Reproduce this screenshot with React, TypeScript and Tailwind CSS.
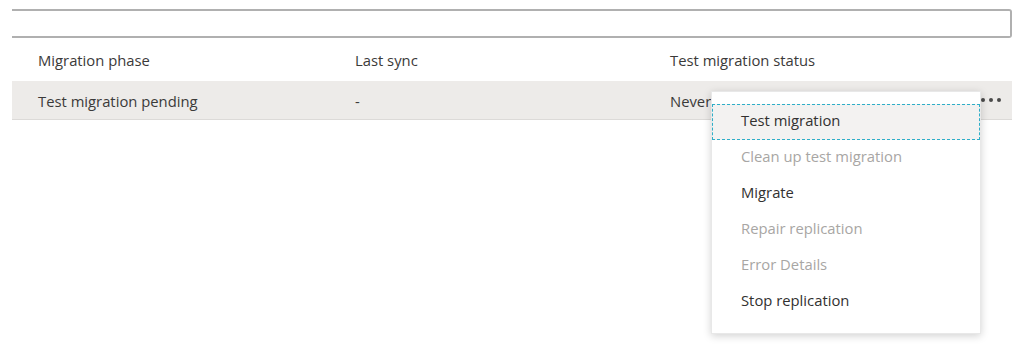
import React from 'react'

const font = { fontFamily: '"Open Sans", "Noto Sans", sans-serif' }

interface MenuItem {
  label: string
  disabled?: boolean
  focused?: boolean
}

const items: MenuItem[] = [
  { label: 'Test migration', focused: true },
  { label: 'Clean up test migration', disabled: true },
  { label: 'Migrate' },
  { label: 'Repair replication', disabled: true },
  { label: 'Error Details', disabled: true },
  { label: 'Stop replication' },
]

const ContextMenu: React.FC = () => (
  <div className="absolute left-[699px] top-[53px] w-[270px] bg-white pt-3 pb-[13px] shadow-[0_2px_8px_rgba(0,0,0,0.18)] border border-[#e8e8e8]">
    {items.map((item) => (
      <div
        key={item.label}
        className={`flex h-9 items-center pl-[29px] pb-[3px] text-[14.8px] ${
          item.focused
            ? 'bg-[#f3f2f1] outline outline-1 outline-dashed outline-[#2eaec8] -outline-offset-1'
            : ''
        } ${item.disabled ? 'text-[#a8a6a4]' : 'text-[#323130]'}`}
      >
        {item.label}
      </div>
    ))}
  </div>
)

export default function App() {
  return (
    <div className="h-[345px] w-[1024px] bg-white pt-[9px] pl-3" style={font}>
      {/* Search box, cropped on the left */}
      <div className="h-[29px] w-[1000px] rounded-r-[3px] border-y-2 border-r-2 border-[#b0b0b0]" />

      <div className="relative w-[1000px]">
        {/* Header */}
        <div className="grid h-[43px] grid-cols-[317px_315px_1fr] items-center text-[14.8px] text-[#3b3a39]">
          <div className="pl-[26px] pt-[2px]">Migration phase</div>
          <div className="pl-[26px] pt-[2px]">Last sync</div>
          <div className="pl-[26px] pt-[2px]">Test migration status</div>
        </div>

        {/* Row */}
        <div className="grid h-[39px] grid-cols-[317px_315px_1fr] items-center border-b border-[#dcdad8] bg-[#edebe9] text-[14.8px] text-[#3b3a39]">
          <div className="pl-[26px] pt-[2px]">Test migration pending</div>
          <div className="pl-[26px] pt-[2px]">-</div>
          <div className="flex items-center justify-between pl-[26px] pr-[11px] pt-[2px]">
            <span>Never</span>
            <span className="flex gap-[4px] pb-[3px]">
              <span className="h-[4px] w-[4px] rounded-full bg-[#4a4a4a]" />
              <span className="h-[4px] w-[4px] rounded-full bg-[#4a4a4a]" />
              <span className="h-[4px] w-[4px] rounded-full bg-[#4a4a4a]" />
            </span>
          </div>
        </div>

        <ContextMenu />
      </div>
    </div>
  )
}
